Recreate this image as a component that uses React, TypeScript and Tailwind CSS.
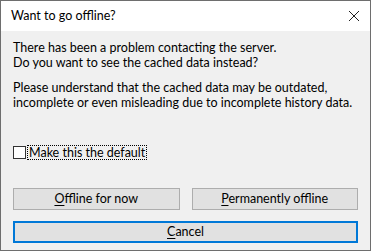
import React from 'react';

const WinButton: React.FC<{ mnemonic: string; rest: string; primary?: boolean; className?: string }> = ({
  mnemonic,
  rest,
  primary,
  className = '',
}) => (
  <button
    className={`h-[22px] bg-[#e1e1e1] text-[12.5px] text-black leading-none flex items-center justify-center ${
      primary ? 'border-2 border-[#0078d7]' : 'border border-[#adadad]'
    } ${className}`}
  >
    <span>
      <span className="underline underline-offset-2">{mnemonic}</span>
      {rest}
    </span>
  </button>
);

const App: React.FC = () => {
  return (
    <div className="w-[371px] h-[252px] bg-white font-['Lato',sans-serif]">
      <div className="w-[371px] h-[251px] border border-[#6e6e6e] flex flex-col bg-[#f0f0f0]">
        <div className="h-[30px] bg-white flex items-center justify-between pl-[10px] pr-[9px] shrink-0">
          <span className="text-[12.5px] text-black">Want to go offline?</span>
          <svg width="12" height="12" viewBox="0 0 12 12" className="mr-[1px]">
            <path d="M1 1 L11 11 M11 1 L1 11" stroke="#222" strokeWidth="1" />
          </svg>
        </div>
        <div className="flex flex-col flex-1 px-[12px] pt-[9px] text-[12.5px] leading-[15px] text-black whitespace-nowrap">
          <p>
            There has been a problem contacting the server.
            <br />
            Do you want to see the cached data instead?
          </p>
          <p className="mt-[10px]">
            Please understand that the cached data may be outdated,
            <br />
            incomplete or even misleading due to incomplete history data.
          </p>
          <label className="flex items-center mt-[35px] h-[15px]">
            <span className="w-[13px] h-[13px] border border-[#333] bg-white shrink-0" />
            <span className="ml-[2px] px-[1px] outline outline-1 outline-dotted outline-black leading-[13px]">
              Make this the default
            </span>
          </label>
          <div className="flex gap-[12px] mt-[28px]">
            <WinButton mnemonic="O" rest="ffline for now" className="flex-1" />
            <WinButton mnemonic="P" rest="ermanently offline" className="flex-1" />
          </div>
          <WinButton mnemonic="C" rest="ancel" primary className="mt-[11px] w-full" />
        </div>
      </div>
    </div>
  );
};

export default App;
